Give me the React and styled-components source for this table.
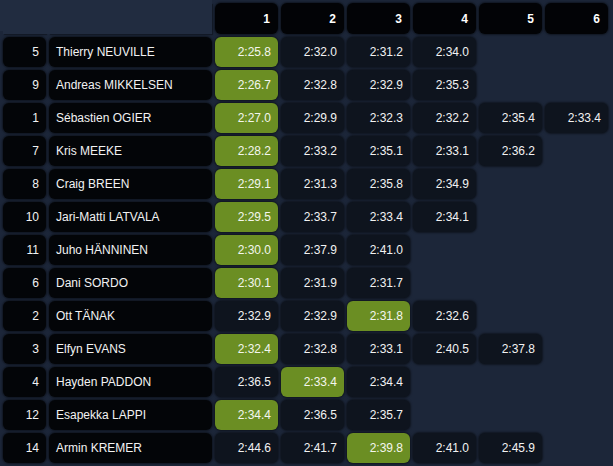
import React from "react";
import styled, { createGlobalStyle } from "styled-components";

const Global = createGlobalStyle`
  html, body { margin: 0; padding: 0; background: #1c2639; }
  body { font-family: "Liberation Sans", Arial, sans-serif; font-size: 12px; color: #fff; }
`;

const Page = styled.div`
  width: 613px;
  height: 466px;
  overflow: hidden;
  background: #1c2639;
`;

const Table = styled.table`
  border-collapse: separate;
  border-spacing: 3px;
  table-layout: fixed;
  width: 611px;
`;

const Blank = styled.th`
  background: #212c40;
  height: 31px;
  padding: 0;
  box-shadow: ${(p) =>
    p.$first
      ? "-3px -3px 0 #212c40, 0 -3px 0 #212c40, 1px 1px 1px rgba(0,0,0,0.3)"
      : "0 -3px 0 #212c40, -3px 0 0 #212c40, -3px -3px 0 #212c40, 1px 1px 1px rgba(0,0,0,0.3)"};
`;

const Head = styled.th`
  background: #020306;
  height: 31px;
  padding: 0 8px 0 0;
  text-align: right;
  font-weight: bold;
  font-size: 12px;
  border-radius: 6px;
  box-sizing: border-box;
  box-shadow: 0 0 2px 1px rgba(0, 0, 0, 0.45);
`;

const Cell = styled.td`
  height: 30px;
  padding: ${(p) => (p.$align === "left" ? "0 0 0 7px" : "0 7px 0 0")};
  text-align: ${(p) => p.$align || "right"};
  background: ${(p) => p.$bg};
  border-radius: 6px;
  white-space: nowrap;
  overflow: hidden;
  box-sizing: border-box;
  box-shadow: ${(p) => (p.$bg === "transparent" ? "none" : "0 0 2px 1px rgba(0, 0, 0, 0.45)")};
  color: ${(p) => (p.$best ? "#f4f6ee" : "#f2f2f2")};
`;

const rows = [
  [5, "Thierry NEUVILLE", ["2:25.8", "2:32.0", "2:31.2", "2:34.0"], 0],
  [9, "Andreas MIKKELSEN", ["2:26.7", "2:32.8", "2:32.9", "2:35.3"], 0],
  [1, "Sébastien OGIER", ["2:27.0", "2:29.9", "2:32.3", "2:32.2", "2:35.4", "2:33.4"], 0],
  [7, "Kris MEEKE", ["2:28.2", "2:33.2", "2:35.1", "2:33.1", "2:36.2"], 0],
  [8, "Craig BREEN", ["2:29.1", "2:31.3", "2:35.8", "2:34.9"], 0],
  [10, "Jari-Matti LATVALA", ["2:29.5", "2:33.7", "2:33.4", "2:34.1"], 0],
  [11, "Juho HÄNNINEN", ["2:30.0", "2:37.9", "2:41.0"], 0],
  [6, "Dani SORDO", ["2:30.1", "2:31.9", "2:31.7"], 0],
  [2, "Ott TÄNAK", ["2:32.9", "2:32.9", "2:31.8", "2:32.6"], 2],
  [3, "Elfyn EVANS", ["2:32.4", "2:32.8", "2:33.1", "2:40.5", "2:37.8"], 0],
  [4, "Hayden PADDON", ["2:36.5", "2:33.4", "2:34.4"], 1],
  [12, "Esapekka LAPPI", ["2:34.4", "2:36.5", "2:35.7"], 0],
  [14, "Armin KREMER", ["2:44.6", "2:41.7", "2:39.8", "2:41.0", "2:45.9"], 2],
];

const stages = [1, 2, 3, 4, 5, 6];

export default function App() {
  return (
    <Page>
      <Global />
      <Table>
        <colgroup>
          <col style={{ width: 43 }} />
          <col style={{ width: 163 }} />
          {stages.map((s) => (
            <col key={s} style={{ width: 63 }} />
          ))}
        </colgroup>
        <thead>
          <tr>
            <Blank $first />
            <Blank />
            {stages.map((s) => (
              <Head key={s}>{s}</Head>
            ))}
          </tr>
        </thead>
        <tbody>
          {rows.map(([num, name, times, best]) => (
            <tr key={num}>
              <Cell $bg="#030508">{num}</Cell>
              <Cell $bg="#030508" $align="left">{name}</Cell>
              {stages.map((s, i) => {
                const t = times[i];
                if (!t) return <Cell key={s} $bg="transparent" />;
                const isBest = i === best;
                return (
                  <Cell key={s} $bg={isBest ? "#6b8e23" : "#0e141e"} $best={isBest}>
                    {t}
                  </Cell>
                );
              })}
            </tr>
          ))}
        </tbody>
      </Table>
    </Page>
  );
}
